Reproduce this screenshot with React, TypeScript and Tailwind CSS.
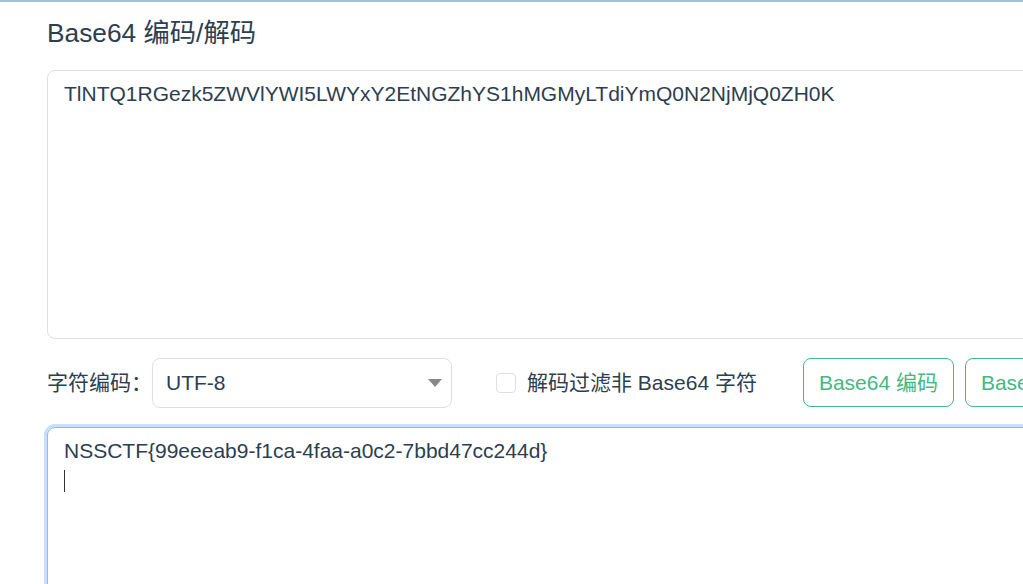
const Base64Tool = () => {
  const encoded = "TlNTQ1RGezk5ZWVlYWI5LWYxY2EtNGZhYS1hMGMyLTdiYmQ0N2NjMjQ0ZH0K";
  const decoded = "NSSCTF{99eeeab9-f1ca-4faa-a0c2-7bbd47cc244d}";

  return (
    <div
      className="h-screen w-full overflow-hidden bg-white text-[#2c3e50]"
      style={{ fontFamily: '"Liberation Sans", "Noto Sans CJK SC", sans-serif' }}
    >
      <div className="h-[2px] w-full bg-[#a3c1d4]" />

      <div className="w-[1160px] pl-[47px]">
        {/* Title */}
        <h2 className="mt-[15px] text-[26.3px] leading-[32px] font-normal">Base64 编码/解码</h2>

        {/* Input */}
        <div className="mt-[21px] h-[269px] rounded-lg border border-[#dcdfe6] px-4 pt-2 text-[21px] leading-[30px] break-all">
          {encoded}
        </div>

        {/* Options */}
        <div className="mt-[19px] flex h-[49px] items-center">
          <label className="w-[105px] text-[21px]">字符编码：</label>
          <div className="flex h-[50px] w-[300px] items-center justify-between rounded-lg border border-[#dcdfe6] pl-[13px] pr-[9px]">
            <span className="text-[21px]">UTF-8</span>
            <svg width="14" height="8" viewBox="0 0 14 8">
              <path d="M0 0 H14 L7 8 Z" fill="#888" />
            </svg>
          </div>

          <div className="ml-[44px] flex items-center">
            <span className="h-[20px] w-[20px] rounded-[4px] border border-[#dcdfe6] bg-white" />
            <span className="ml-[11px] text-[21px]">解码过滤非 Base64 字符</span>
          </div>

          <button className="ml-[46px] h-[49px] w-[151px] rounded-lg border border-[#42b983] text-[21px] text-[#42b983]">
            Base64 编码
          </button>
          <button className="ml-[11px] h-[49px] w-[151px] rounded-lg border border-[#42b983] text-[21px] text-[#42b983]">
            Base64 解码
          </button>
        </div>

        {/* Output (focused) */}
        <div className="mt-[20px] h-[269px] rounded-lg border border-[#8fb9f7] px-4 pt-2 text-[21px] leading-[30px] ring-[3px] ring-[#c9defc]">
          <div>{decoded}</div>
          <div className="flex h-[30px] items-center">
            <span className="h-[22px] w-px bg-[#333]" />
          </div>
        </div>
      </div>
    </div>
  );
};

export default Base64Tool;
